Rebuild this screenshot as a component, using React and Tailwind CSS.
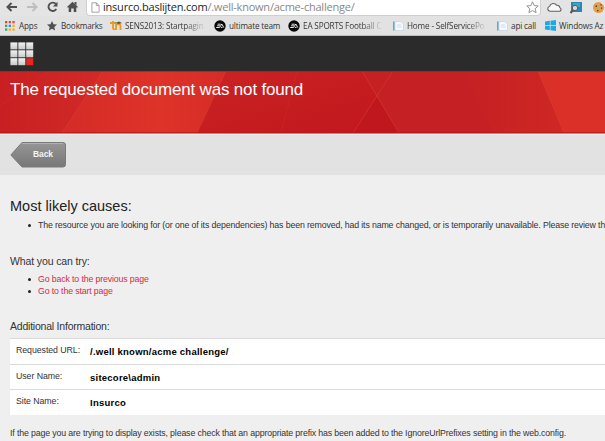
import React from "react";

function PageIcon({ className }) {
  return (
    <svg className={className} viewBox="0 0 10 12" fill="none">
      <path d="M1 .8h5l3 3v7.4H1z" fill="#fff" stroke="#9b9b9b" />
      <path d="M6 .8v3h3" stroke="#9b9b9b" />
    </svg>
  );
}

function TabPage() {
  return (
    <svg className="h-[10px] w-[11px] shrink-0" viewBox="0 0 11 10">
      <path d="M2 .5h6l2.5 2.5v6.5H2z" fill="#f5f8fc" stroke="#ccd3df" strokeWidth=".8" />
      <path d="M4 4h4M4 6h5" stroke="#cbd6e6" strokeWidth=".8" />
      <path d="M0 .5h1.5v9H0z" fill="#5ba7d8" />
    </svg>
  );
}

function EaIcon() {
  return (
    <svg className="h-[12px] w-[12px] shrink-0" viewBox="0 0 12 12" fill="none">
      <circle cx="6" cy="6" r="5.7" fill="#080808" />
      <path d="M3.7 4.2h3M3.1 5.8h2.8M2.2 7.5h3.3L7.8 4l2 3.6M6.8 7.4h1.7" stroke="#fff" strokeWidth=".9" />
    </svg>
  );
}

function Apps() {
  const colors = ["#dd4b39", "#dd4b39", "#dd4b39", "#35a65b", "#4285dd", "#efad25", "#35a65b", "#efad25", "#efad25"];
  return (
    <svg className="h-[10px] w-[10px] shrink-0" viewBox="0 0 10 10">
      {colors.map((c, i) => (
        <rect key={i} x={(i % 3) * 3.7} y={Math.floor(i / 3) * 3.7} width="2.3" height="2.3" fill={c} />
      ))}
    </svg>
  );
}

function Toolbar() {
  return (
    <div className="flex h-4 items-start bg-[#e4e4e4]">
      <svg className="h-4 w-[86px] shrink-0" viewBox="0 0 86 16" fill="none">
        <path d="M17 7H8M11.5 3L7.5 7l4 4" stroke="#505050" strokeWidth="2" />
        <path d="M27 7h9M32.500 3l4 4-4 4" stroke="#bdbdbd" strokeWidth="2" />
        <path d="M56 4.200A4.200 4.200 0 1 0 56.300 9" stroke="#505050" strokeWidth="1.900" />
        <path d="M57.500 1.800v4.700h-4.700z" fill="#505050" />
        <path d="M67 7l5.500-5.200L78 7l-1 .8-.7-.6V12h-2.600V8.500h-2.500V12h-2.500V7.200l-.7.600z" fill="#505050" />
        <path d="M74.500 2h2v3.500l-2-1.800z" fill="#505050" />
      </svg>
      <div className="flex h-4 w-[455px] shrink-0 items-start rounded-b-sm border-b border-l border-r border-[#cfcfcf] bg-white pl-[4px]">
        <PageIcon className="mt-[2px] h-[11px] w-[9px] shrink-0" />
        <div className="ml-[3px] w-[423px] whitespace-nowrap font-['Open_Sans',sans-serif] text-[11px] leading-[14px] tracking-[-0.220px] text-[#888]">
          <span className="inline-block text-[#252525]">insurco.baslijten.com</span>
          <span className="inline-block">/.well-known/acme-challenge/</span>
        </div>
        <svg className="mt-[1px] h-[13px] w-[13px] shrink-0" viewBox="0 0 13 13">
          <path d="M6.500.8l1.700 3.800 4 .4-3 2.700.9 4-3.600-2.100-3.600 2.100.9-4-3-2.700 4-.4z" fill="#fff" stroke="#888" strokeWidth=".9" />
        </svg>
      </div>
      <svg className="h-4 w-16 shrink-0" viewBox="0 0 64 16">
        <path d="M9 11.300a2.600 2.600 0 0 1-.3-5.100 3.800 3.800 0 0 1 6.900-.9 2.800 2.800 0 0 1 3.300 2.400 1.900 1.900 0 0 1-.3 3.600z" fill="#f8f8f8" stroke="#626262" strokeWidth="1.100" />
        <path d="M30 2h11v10H30z" fill="#2c87af" />
        <path d="M32 4h7M32 6h7" stroke="#6fb6ce" />
        <circle cx="34" cy="8" r="2.700" fill="#d2d8dc" stroke="#4d6069" />
        <path d="M32 10l-2.500 3" stroke="#555" strokeWidth="2" />
        <circle cx="57.500" cy="7.500" r="5.500" fill="#dda050" />
        <path d="M54.500 5.500H56V7h-1.500zm5-1.500h1.200v1.500h-1.200zM56 10h1.500v1.200H56zm4-2.500h1.200v1.200H60z" fill="#633a1b" />
        <path d="M58 1l2 1 .5 2 2 1 1.500-1V0h-6z" fill="#e4e4e4" />
      </svg>
    </div>
  );
}

function Faded({ children }) {
  return (
    <span className="inline-block bg-linear-to-r from-[#333] from-75% to-[#d0d0d0] bg-clip-text text-transparent">{children}</span>
  );
}

function Bookmarks() {
  return (
    <div className="flex h-5 border-b border-[#bdbdbd] bg-[#e2e2e2] pl-[5px] font-['Open_Sans',sans-serif] text-[8.200px] leading-[20px] tracking-[-0.170px] whitespace-nowrap text-[#333]">
      <div className="flex w-[42px] shrink-0 items-center gap-[4px]"><Apps /><span>Apps</span></div>
      <div className="flex w-[63px] shrink-0 items-center gap-[4px]">
        <svg className="h-[10px] w-[10px] shrink-0" viewBox="0 0 10 10"><path d="M5 0l1.500 3.300 3.500.3-2.700 2.400.8 3.600L5 7.700 1.900 9.600 2.700 6 0 3.600l3.500-.3z" fill="#505050" /></svg>
        <span>Bookmarks</span>
      </div>
      <div className="flex w-[104px] shrink-0 items-center gap-[3px]">
        <svg className="h-[10px] w-[12px] shrink-0" viewBox="0 0 12 10" fill="none"><path d="M0 2h6M3 0v6.500Q3 9 5 8M6 9V3m0 2c0-2.500 4.500-2.500 4.500 0v4" stroke="#e79a20" strokeWidth="1.800" /><path d="M5 2l4-1.500L12 2l-3 1z" fill="#605443" /></svg>
        <Faded>SENS2013: Startpagin</Faded>
      </div>
      <div className="flex w-[74px] shrink-0 items-center gap-[3px]"><EaIcon /><span>ultimate team</span></div>
      <div className="flex w-[105px] shrink-0 items-center gap-[3px]"><EaIcon /><Faded>EA SPORTS Football C</Faded></div>
      <div className="flex w-[104px] shrink-0 items-center gap-[3px]"><TabPage /><Faded>Home - SelfServicePo</Faded></div>
      <div className="flex w-[48px] shrink-0 items-center gap-[3px]"><TabPage /><span>api call</span></div>
      <div className="flex w-[60px] shrink-0 items-center gap-[3px]">
        <svg className="h-[11px] w-[11px] shrink-0" viewBox="0 0 11 11"><path d="M0 1.500L4.800.8v4.400H0zM5.500.7L11 0v5.200H5.500zM0 5.900h4.800v4.400L0 9.600zm5.500 0H11V11l-5.500-.7z" fill="#1ca9e5" /></svg>
        <span>Windows Az</span>
      </div>
    </div>
  );
}

function Logo() {
  return (
    <svg className="h-[24px] w-[24px]" viewBox="0 0 24 24">
      <defs><linearGradient id="tile" x1="0" y1="0" x2="0" y2="1"><stop stopColor="#f3f3f3" /><stop offset="1" stopColor="#c8c8c8" /></linearGradient></defs>
      {[0, 1, 2, 3, 4, 5, 6, 7, 8].map((i) => (
        <rect key={i} x={0.4 + (i % 3) * 7.9} y={0.4 + Math.floor(i / 3) * 7.9} width="7" height="7" fill={i === 8 ? "#e2281f" : "url(#tile)"} />
      ))}
    </svg>
  );
}

function Banner() {
  return (
    <div className="relative h-[63px] border-b border-[#e07b74] bg-[#c52023]">
      <svg className="absolute inset-0 h-[62px] w-full" viewBox="0 0 605 62" preserveAspectRatio="none" fill="none">
        <defs>
          <linearGradient id="left"><stop stopColor="#c81f22" /><stop offset="1" stopColor="#d22a27" /></linearGradient>
          <linearGradient id="mid"><stop stopColor="#d42b27" /><stop offset=".6" stopColor="#de3329" /><stop offset="1" stopColor="#d62c27" /></linearGradient>
          <linearGradient id="dark" x1="0" y1="0" x2="1" y2="1"><stop stopColor="#cb2323" /><stop offset="1" stopColor="#c1171e" /></linearGradient>
          <linearGradient id="right"><stop stopColor="#c52023" /><stop offset="1" stopColor="#ce2724" /></linearGradient>
        </defs>
        <path d="M0 0h103L62 62H0z" fill="url(#left)" />
        <path d="M103 0h123l-29 62H62z" fill="url(#mid)" />
        <path d="M226 0h136l15 26-24 36H197z" fill="url(#dark)" />
        <path d="M377 26l22 36h-46z" fill="#c0161d" />
        <path d="M460 0h78l26 62h-70z" fill="url(#right)" />
        <path d="M538 0h67v62h-41z" fill="#da3027" />
        <path d="M103 0L62 62M226 0l-29 62M362 0l37 62M393 0l-40 62M538 0l26 62" stroke="#e65436" strokeOpacity=".35" />
        <path d="M50 0L0 35M297 0l-16 62" stroke="#e65436" strokeOpacity=".15" />
        <path d="M0 .5h605M0 61.500h605" stroke="#b5191d" strokeOpacity=".7" />
      </svg>
      <h1 className="relative pl-[10px] pt-[8px] text-[17px] leading-[22px] tracking-[-0.180px] whitespace-nowrap text-white"><span className="inline-block">The requested document was not found</span></h1>
    </div>
  );
}

function Row({ label, value }) {
  return (
    <div className="flex h-[25.700px] border-t border-[#dadada] bg-white pl-[6px]">
      <div className="w-[74px] shrink-0 pt-[5px] leading-[12px] tracking-[-0.070px]"><span className="inline-block">{label}</span></div>
      <div className="pt-[6px] text-[9.500px] leading-[14px] font-bold tracking-[0.240px] text-black"><span className="inline-block">{value}</span></div>
    </div>
  );
}

function Bullet({ children, red }) {
  return (
    <li className="flex h-[12px] items-center pl-[18px] leading-[12px]">
      <span className="mr-[7px] h-[3px] w-[3px] shrink-0 rounded-full bg-[#222]" />
      <span className={red ? "text-[#dc2942]" : ""}>{children}</span>
    </li>
  );
}

export default function App() {
  return (
    <div className="h-[441px] w-[605px] overflow-hidden bg-[#efefef] font-['Liberation_Sans',Arial,sans-serif] text-[8.800px] tracking-[-0.145px] whitespace-nowrap text-[#333]">
      <Toolbar />
      <Bookmarks />
      <div className="h-[35px] bg-[#2b2b2b] pl-[10px] pt-[6px]"><Logo /></div>
      <Banner />
      <div className="h-[41px] border-t border-[#ededed] bg-[#e2e2e2] pl-[10px] pt-[7px]">
        <div className="relative h-[26px] w-[56px]">
          <svg className="absolute inset-0 h-[26px] w-[56px]" viewBox="0 0 56 26">
            <defs><linearGradient id="btn" x1="0" y1="0" x2="0" y2="1"><stop stopColor="#969696" /><stop offset="1" stopColor="#777" /></linearGradient></defs>
            <path d="M12 .5h41q2.500 0 2.500 2.500v19.500q0 2.500-2.500 2.500H12L.8 13z" fill="url(#btn)" stroke="#7b7b7b" />
            <path d="M12 1.500h41" stroke="#b0b0b0" />
          </svg>
          <span className="relative block pl-[23px] text-[8.500px] leading-[25px] font-bold tracking-[-0.100px] text-[#f4f4f4]">Back</span>
        </div>
      </div>
      <main className="pl-[10px]">
        <h2 className="pt-[22px] text-[14.500px] leading-[18px] tracking-normal text-[#222]"><span className="inline-block">Most likely causes:</span></h2>
        <ul className="pt-[4px]"><Bullet>The resource you are looking for (or one of its dependencies) has been removed, had its name changed, or is temporarily unavailable. Please review the</Bullet></ul>
        <h3 className="pt-[23px] text-[10.500px] leading-[14px] tracking-[-0.120px]"><span className="inline-block">What you can try:</span></h3>
        <ul className="pt-[5px]"><Bullet red>Go back to the previous page</Bullet><Bullet red>Go to the start page</Bullet></ul>
        <h3 className="pt-[22px] text-[10.500px] leading-[14px] tracking-[-0.220px]"><span className="inline-block">Additional Information:</span></h3>
        <div className="mt-[5px]">
          <Row label="Requested URL:" value="/.well known/acme challenge/" />
          <Row label="User Name:" value="sitecore\admin" />
          <Row label="Site Name:" value="Insurco" />
        </div>
        <p className="pt-[12px] leading-[12px]"><span className="inline-block">If the page you are trying to display exists, please check that an appropriate prefix has been added to the IgnoreUrlPrefixes setting in the web.config.</span></p>
      </main>
    </div>
  );
}
